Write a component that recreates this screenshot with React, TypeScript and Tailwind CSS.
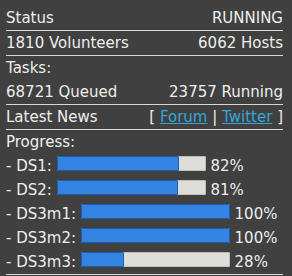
import React from "react";

const bars = [
  { label: "- DS1:", pct: 82 },
  { label: "- DS2:", pct: 81 },
  { label: "- DS3m1:", pct: 100 },
  { label: "- DS3m2:", pct: 100 },
  { label: "- DS3m3:", pct: 28 },
];

export default function App() {
  return (
    <div
      className="w-[292px] h-[276px] bg-[#404040] text-[#eeeeec] text-[15px] leading-[24px] pl-[6px] pr-[9px] pt-[6px] overflow-hidden"
      style={{ fontFamily: '"DejaVu Sans", sans-serif' }}
    >
      <div className="flex justify-between border-b border-[#d8d8d8]">
        <span>Status</span>
        <span>RUNNING</span>
      </div>
      <div className="flex justify-between border-b border-[#d8d8d8]">
        <span>1810 Volunteers</span>
        <span>6062 Hosts</span>
      </div>
      <div>Tasks:</div>
      <div className="flex justify-between border-b border-[#d8d8d8]">
        <span>68721 Queued</span>
        <span>23757 Running</span>
      </div>
      <div className="flex justify-between border-b border-[#d8d8d8]">
        <span>Latest News</span>
        <span>
          [ <a className="text-[#33a7d8] underline" href="#">Forum</a> |{" "}
          <a className="text-[#33a7d8] underline" href="#">Twitter</a> ]
        </span>
      </div>
      <div className="border-b border-[#d8d8d8]">
        <div>Progress:</div>
        {bars.map((b) => (
          <div key={b.label} className="whitespace-nowrap">
            {b.label}{" "}
            <span className="relative inline-block w-[149px] h-[15px] bg-[#deddda] border border-[#c0bfbc] rounded-[1px] align-baseline">
              <span
                className="absolute left-[-1px] top-[-1px] bottom-[-1px] bg-[#3584e4] border border-[#1c5fb0] rounded-[1px]"
                style={{ width: `calc(${b.pct}% + 2px)` }}
              />
            </span>{" "}
            {b.pct}%
          </div>
        ))}
      </div>
    </div>
  );
}
